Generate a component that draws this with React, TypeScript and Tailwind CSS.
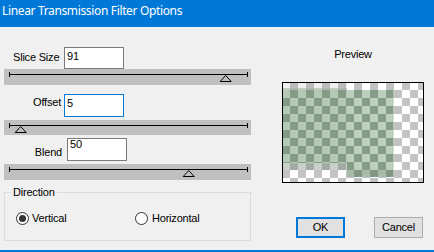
import React from "react";

function Slider({ pos, h }: { pos: number; h: number }) {
  return (
    <div className={h === 15 ? "ml-[4px] w-[247px] h-[15px] bg-[#c0c0c0]" : "ml-[4px] w-[247px] h-[16px] bg-[#c0c0c0]"}>
      <svg width="247" height={h} className="block">
        <line x1="5" y1="5.5" x2="244" y2="5.5" stroke="#000" strokeWidth="1" />
        <line x1="5.5" y1="3" x2="5.5" y2="8" stroke="#000" strokeWidth="1" />
        <line x1="243.5" y1="3" x2="243.5" y2="8" stroke="#000" strokeWidth="1" />
        <polygon
          points={`${pos},6.5 ${pos + 5.5},12.5 ${pos - 5.5},12.5`}
          fill="#c0c0c0"
          stroke="#000"
          strokeWidth="1"
        />
      </svg>
    </div>
  );
}

function Radio({ checked }: { checked?: boolean }) {
  return (
    <div className="w-[13px] h-[13px] rounded-full border border-[#333333] bg-white flex items-center justify-center">
      {checked && <div className="w-[7px] h-[7px] rounded-full bg-[#333333]" />}
    </div>
  );
}

function Preview() {
  return (
    <svg width="140" height="99" className="block">
      <defs>
        <pattern id="bgck" x="-1" y="-1" width="16" height="16" patternUnits="userSpaceOnUse">
          <rect width="16" height="16" fill="#ffffff" />
          <rect x="8" y="0" width="8" height="8" fill="#c3c3c3" />
          <rect x="0" y="8" width="8" height="8" fill="#c3c3c3" />
        </pattern>
        <pattern id="grck" x="-1" y="-1" width="16" height="16" patternUnits="userSpaceOnUse">
          <rect width="16" height="16" fill="#869e89" />
          <rect x="8" y="0" width="8" height="8" fill="#bccfbd" />
          <rect x="0" y="8" width="8" height="8" fill="#bccfbd" />
        </pattern>
        <pattern id="gyck" x="-1" y="-1" width="16" height="16" patternUnits="userSpaceOnUse">
          <rect width="16" height="16" fill="#c9d0c9" />
          <rect x="8" y="0" width="8" height="8" fill="#a3aca4" />
          <rect x="0" y="8" width="8" height="8" fill="#a3aca4" />
        </pattern>
      </defs>
      <rect width="140" height="99" fill="url(#bgck)" />
      <rect x="0" y="0" width="64" height="7" fill="#8a948b" opacity="0.15" />
      <rect x="0" y="5" width="64" height="3" fill="#a5b4a6" opacity="0.6" />
      <rect x="0" y="7" width="111" height="73" fill="url(#grck)" />
      <rect x="0" y="7" width="64" height="73" fill="#6f8a72" opacity="0.08" />
      <rect x="0" y="80" width="64" height="7" fill="url(#gyck)" />
      <rect x="64" y="80" width="47" height="14" fill="url(#grck)" />
      <rect x="64" y="87" width="47" height="7" fill="#7a8a7c" opacity="0.3" />
      <rect x="110" y="7" width="1" height="87" fill="#d8e2d6" opacity="0.6" />
    </svg>
  );
}

export default function App() {
  return (
    <div className="w-[434px] h-[252px] bg-[#f0f0f0] flex flex-col overflow-hidden text-black font-['Liberation_Sans',Arial,sans-serif] text-[11px] leading-[13px] tracking-[-0.2px]">
      <div className="h-[27px] shrink-0 bg-[#0078d7] text-white pl-[2px] pt-[3px] font-['Noto_Sans',sans-serif] text-[12px] leading-[16px] tracking-[-0.35px]">
        Linear Transmission Filter Options
      </div>
      <div className="flex flex-1">
        <div className="w-[251px] flex flex-col">
          <div className="mt-[20px] flex h-[22px]">
            <div className="w-[64px] pl-[13px] pt-[4px]">Slice Size</div>
            <div className="w-[60px] h-[22px] border border-[#7a7a7a] bg-white pl-[2px] pt-[2px]">91</div>
          </div>
          <Slider pos={221.7} h={16} />
          <div className="mt-[9px] flex h-[23px]">
            <div className="w-[61px] text-right pt-[2px]">Offset</div>
            <div className="ml-[3px] w-[60px] h-[23px] border border-[#0078d7] bg-white pl-[2px] pt-[2px]">5</div>
          </div>
          <div className="mt-[3px]">
            <Slider pos={16.7} h={15} />
          </div>
          <div className="mt-[3px] flex h-[23px]">
            <div className="w-[62px] text-right pt-[8px]">Blend</div>
            <div className="ml-[5px] w-[60px] h-[23px] border border-[#7a7a7a] bg-white pl-[2px] leading-[11px]">50</div>
          </div>
          <div className="mt-[3px]">
            <Slider pos={184.7} h={16} />
          </div>
          <div className="relative mt-[12px] ml-[4px] w-[247px] h-[49px] border border-[#dcdcdc]">
            <span className="absolute left-[6px] top-[-7px] px-[2px] bg-[#f0f0f0]">Direction</span>
            <div className="mt-[19px] flex items-center h-[13px] pl-[11px]">
              <div className="w-[119px] flex items-center">
                <Radio checked />
                <span className="ml-[3px]">Vertical</span>
              </div>
              <div className="flex items-center">
                <Radio />
                <span className="ml-[4px]">Horizontal</span>
              </div>
            </div>
          </div>
        </div>
        <div className="flex-1 flex flex-col pl-[31px]">
          <div className="mt-[21px] w-[142px] text-center">Preview</div>
          <div className="mt-[21px] w-[142px] h-[101px] border border-black">
            <Preview />
          </div>
          <div className="mt-[34px] flex">
            <div className="ml-[14px] w-[49px] h-[21px] border-2 border-[#0078d7] bg-[#e1e1e1] flex items-center justify-center">OK</div>
            <div className="ml-[29px] w-[49px] h-[21px] border border-[#adadad] bg-[#e1e1e1] flex items-center justify-center">Cancel</div>
          </div>
        </div>
      </div>
      <div className="h-[2px] shrink-0 bg-[#0078d7]" />
    </div>
  );
}
